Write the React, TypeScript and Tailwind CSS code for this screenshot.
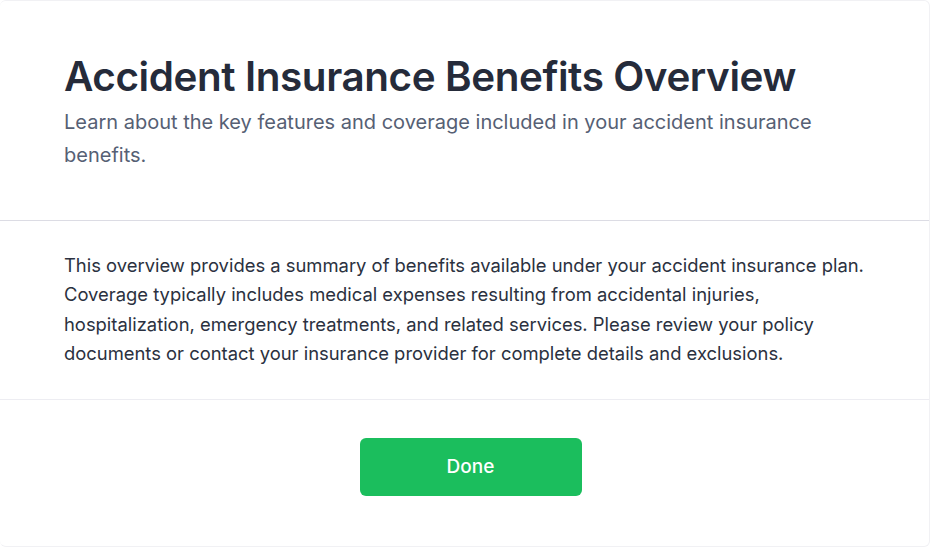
export default function App() {
  return (
    <div className="w-[930px] h-[547px] bg-white" style={{ fontFamily: 'Inter, "Noto Sans", sans-serif' }}>
      <div className="h-full flex flex-col rounded-md border border-l-0 border-[#f1f1f4] bg-white overflow-hidden">
        {/* Header */}
        <div className="px-16 pt-[52px] pb-[49px] border-b border-[#dcdce4]">
          <h1 className="text-[40.4px] leading-[48px] font-semibold tracking-[-0.01em] text-[#252b3a]">
            Accident Insurance Benefits Overview
          </h1>
          <p className="mt-[5px] text-[20px] leading-[32.5px] text-[#566074]">
            Learn about the key features and coverage included in your accident insurance benefits.
          </p>
        </div>

        {/* Body */}
        <div className="px-16 pt-[30px] pb-[31px] border-b border-[#ededf2]">
          <p className="text-[18.4px] leading-[29.25px] text-[#2b3140]">
            This overview provides a summary of benefits available under your accident insurance plan.
            Coverage typically includes medical expenses resulting from accidental injuries,
            hospitalization, emergency treatments, and related services. Please review your policy
            documents or contact your insurance provider for complete details and exclusions.
          </p>
        </div>

        {/* Footer */}
        <div className="flex justify-center pt-[38px] pl-[12px]">
          <button className="w-[222px] h-[58px] rounded-md bg-[#1bbe5d] text-white text-[19px] font-medium">
            Done
          </button>
        </div>
      </div>
    </div>
  );
}
